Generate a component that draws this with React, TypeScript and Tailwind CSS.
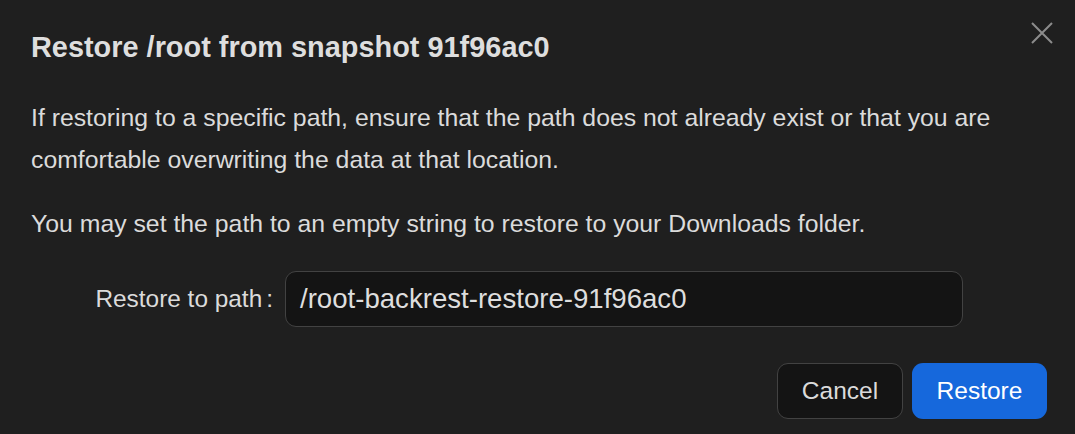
import React from "react";

export default function App() {
  return (
    <div
      className="w-[1075px] h-[434px] bg-[#1f1f1f] text-[#dbdbdb] flex flex-col relative overflow-hidden"
      style={{ fontFamily: '"Liberation Sans", Arial, sans-serif' }}
    >
      <button className="absolute right-[22px] top-[22px] w-[22px] h-[22px] flex items-center justify-center text-[#8c8c8c]">
        <svg width="22" height="22" viewBox="0 0 22 22" fill="none" stroke="currentColor" strokeWidth="2">
          <path d="M1 1 L21 21 M21 1 L1 21" />
        </svg>
      </button>
      <div className="pl-[31px] pr-[28px] pt-[29px]">
        <h2 className="text-[28.9px] leading-[36px] font-bold text-[#dedede]">
          Restore /root from snapshot 91f96ac0
        </h2>
        <p className="mt-[32px] text-[24.8px] leading-[42px]">
          If restoring to a specific path, ensure that the path does not already exist or that you are comfortable overwriting the data at that location.
        </p>
        <p className="mt-[22px] text-[24.8px] leading-[42px]">
          You may set the path to an empty string to restore to your Downloads folder.
        </p>
        <div className="mt-[26px] flex items-center">
          <label className="w-[254px] pr-[12px] text-right text-[24.4px] leading-[32px] text-[#dbdbdb] whitespace-nowrap">
            Restore to path
            <span className="ml-[4px]">:</span>
          </label>
          <div className="w-[678px] h-[56px] rounded-[11px] border border-[#424242] bg-[#141414] flex items-center px-[14px]">
            <span className="text-[27.6px] leading-[32px] text-[#dedede]">/root-backrest-restore-91f96ac0</span>
          </div>
        </div>
        <div className="mt-[36px] flex justify-end gap-[9px]">
          <button className="w-[126px] h-[56px] rounded-[11px] border border-[#424242] bg-[#141414] text-[24.5px] text-[#dbdbdb]">
            Cancel
          </button>
          <button className="w-[135px] h-[56px] rounded-[11px] bg-[#1668dc] text-[24.5px] text-white">
            Restore
          </button>
        </div>
      </div>
    </div>
  );
}
